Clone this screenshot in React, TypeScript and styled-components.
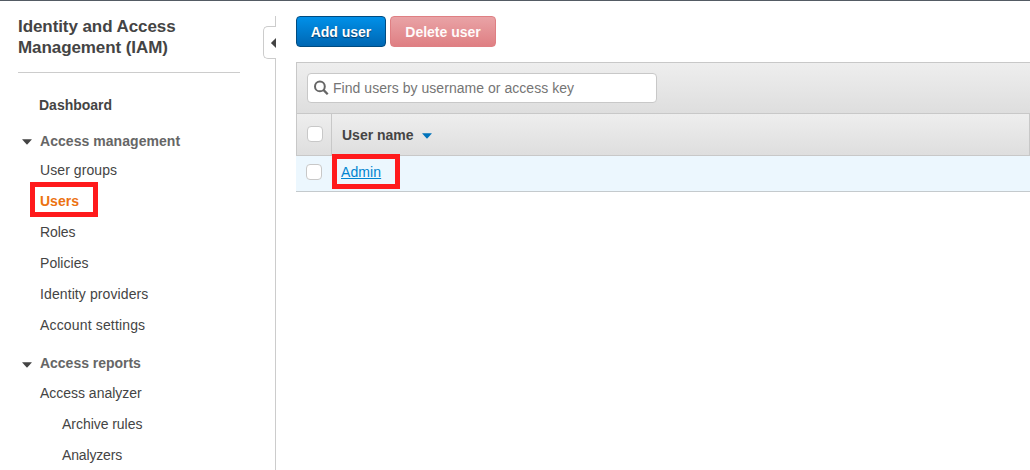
import React from 'react';
import styled, { createGlobalStyle } from 'styled-components';

const GlobalStyle = createGlobalStyle`
  * { box-sizing: border-box; }
  body {
    margin: 0;
    background: #fff;
    color: #444;
    font: 14px/20px "Liberation Sans", Arial, sans-serif;
    overflow: hidden;
  }
`;

const Page = styled.div`
  display: flex;
  height: 470px;
  border-top: 1px solid #545b64;
  overflow: hidden;
`;

const Sidebar = styled.nav`
  width: 240px;
  flex: none;
  padding: 15px 0 0 18px;
`;

const Title = styled.h1`
  margin: 0;
  padding-bottom: 14px;
  border-bottom: 1px solid #ccc;
  font-size: 17px;
  line-height: 21px;
  letter-spacing: -0.08px;
`;

const NavList = styled.div`
  display: flex;
  flex-direction: column;
  padding-top: 17px;
`;

const Item = styled.a<{ $level?: number; $active?: boolean; $bold?: boolean; $track?: number }>`
  height: 31px;
  line-height: 31px;
  padding-left: ${(p) => (p.$level === 2 ? 44 : 22)}px;
  letter-spacing: ${(p) => p.$track ?? 0.08}px;
  font-weight: ${(p) => (p.$active || p.$bold ? 700 : 400)};
  color: ${(p) => (p.$active ? '#ec7211' : '#444')};
`;

const Dashboard = styled(Item)`
  padding-left: 21px;
`;

const Group = styled.div<{ $top: number; $height?: number; $track?: number }>`
  display: flex;
  align-items: center;
  gap: 8px;
  height: 28px;
  margin-top: ${(p) => p.$top}px;
  margin-bottom: ${(p) => (p.$height ?? 28) - 28}px;
  padding-left: 4px;
  color: #666;
  font-weight: 700;
  letter-spacing: ${(p) => p.$track ?? 0.05}px;
`;

const Marked = styled.span`
  position: relative;
`;

const Highlight = styled.span<{ $left: number; $top: number }>`
  position: absolute;
  left: ${(p) => p.$left}px;
  top: ${(p) => p.$top}px;
  width: 68px;
  height: 35px;
  border: 5px solid #ff1a1c;
  pointer-events: none;
`;

const Splitter = styled.div`
  width: 13px;
  flex: none;
  margin: 15px 0 0 23px;
  display: flex;
  flex-direction: column;
  align-items: flex-end;
`;

const Rule = styled.div<{ $height?: number }>`
  width: 1px;
  background: #ccc;
  ${(p) => (p.$height ? `height: ${p.$height}px;` : 'flex: 1;')}
`;

const CollapseTab = styled.button`
  width: 13px;
  height: 33px;
  padding: 0;
  display: flex;
  align-items: center;
  justify-content: flex-end;
  background: #fff;
  border: 1px solid #ccc;
  border-right: 0;
  border-radius: 5px 0 0 5px;
`;

const Main = styled.main`
  flex: 1;
  min-width: 0;
  padding: 15px 0 0 20px;
`;

const Actions = styled.div`
  display: flex;
  gap: 4px;
  margin-bottom: 15px;
`;

const Button = styled.button<{ $danger?: boolean }>`
  width: ${(p) => (p.$danger ? 106 : 90)}px;
  height: 31px;
  padding: 0;
  border: 1px solid ${(p) => (p.$danger ? '#df7f83' : '#004b80')};
  border-radius: 4px;
  background: ${(p) =>
    p.$danger ? 'linear-gradient(#e9a3a6, #df7f83)' : 'linear-gradient(#0090e9, #0067b3)'};
  color: ${(p) => (p.$danger ? '#fffafa' : '#fff')};
  text-shadow: ${(p) => (p.$danger ? 'none' : '0 1px 1px #003a66')};
  font: 700 14px/31px "Liberation Sans", Arial, sans-serif;
  letter-spacing: -0.02px;
`;

const Toolbar = styled.div`
  height: 51px;
  padding: 10px;
  border: 1px solid #c8c8c8;
  border-width: 1px 0 0 1px;
  background: linear-gradient(#eee, #dedede);
`;

const Search = styled.div`
  width: 350px;
  height: 30px;
  display: flex;
  align-items: center;
  gap: 4px;
  padding-left: 6px;
  background: #fff;
  border: 1px solid #c8c8c8;
  border-radius: 4px;
  color: #757575;
  letter-spacing: 0.04px;
`;

const HeaderRow = styled.div`
  display: flex;
  height: 43px;
  border: 1px solid #c8c8c8;
  background: linear-gradient(#eee, #dedede);
`;

const BodyRow = styled.div`
  display: flex;
  height: 36px;
  background: #ecf7fe;
  border-bottom: 1px solid #c4cacd;
`;

const CheckCell = styled.div<{ $header?: boolean }>`
  width: 35px;
  padding: ${(p) => (p.$header ? '12px 0 0 10px' : '8px 0 0 10px')};
  border-right: ${(p) => (p.$header ? '1px solid #c8c8c8' : '0')};
`;

const Checkbox = styled.div`
  width: 16px;
  height: 16px;
  background: #fff;
  border: 1px solid #c8c8c8;
  border-radius: 4px;
`;

const NameCell = styled.div<{ $header?: boolean }>`
  display: flex;
  align-items: center;
  gap: 8px;
  padding-left: 10px;
  padding-bottom: ${(p) => (p.$header ? 0 : 3)}px;
  font-weight: ${(p) => (p.$header ? 700 : 400)};
`;

const UserLink = styled.a`
  color: #0084d0;
  text-decoration: underline;
  letter-spacing: 0.1px;
`;

const CaretIcon = styled.svg<{ $drop: number }>`
  flex: none;
  margin-top: ${(p) => p.$drop * 2}px;
`;

const Caret = ({ color = '#444', drop = 1 }: { color?: string; drop?: number }) => (
  <CaretIcon $drop={drop} width="10" height="6" viewBox="0 0 10 6">
    <path d="M.5.2h9q.4.2.1.6L5.5 5.3q-.5.5-1 0L.4.8Q.1.4.5.2z" fill={color} />
  </CaretIcon>
);

export default function App() {
  return (
    <>
      <GlobalStyle />
      <Page>
        <Sidebar>
          <Title>
            Identity and Access
            <br />
            Management (IAM)
          </Title>
          <NavList>
            <Dashboard $bold $track={0}>Dashboard</Dashboard>
            <Group $top={6}>
              <Caret />
              Access management
            </Group>
            <Item>User groups</Item>
            <Item $active $track={0}>
              <Marked>
                Users
                <Highlight $left={-10} $top={-11} />
              </Marked>
            </Item>
            <Item $track={-0.05}>Roles</Item>
            <Item $track={0.04}>Policies</Item>
            <Item $track={0.1}>Identity providers</Item>
            <Item $track={0.16}>Account settings</Item>
            <Group $top={8} $height={29} $track={-0.02}>
              <Caret drop={2} />
              Access reports
            </Group>
            <Item $track={-0.02}>Access analyzer</Item>
            <Item $level={2} $track={-0.04}>Archive rules</Item>
            <Item $level={2} $track={-0.15}>Analyzers</Item>
          </NavList>
        </Sidebar>
        <Splitter>
          <Rule $height={10} />
          <CollapseTab aria-label="Collapse navigation">
            <svg width="5" height="10" viewBox="0 0 5 10">
              <path d="M5 0v10L.4 5.5q-.4-.5 0-1z" fill="#444" />
            </svg>
          </CollapseTab>
          <Rule />
        </Splitter>
        <Main>
          <Actions>
            <Button>Add user</Button>
            <Button $danger>Delete user</Button>
          </Actions>
          <Toolbar>
            <Search>
              <svg width="15" height="16" viewBox="0 0 15 16" fill="none" stroke="#666">
                <circle cx="5.9" cy="6.4" r="4.9" strokeWidth="2" />
                <path d="M9.4 9.9l4.3 4.3" strokeWidth="2.3" />
              </svg>
              Find users by username or access key
            </Search>
          </Toolbar>
          <HeaderRow>
            <CheckCell $header>
              <Checkbox />
            </CheckCell>
            <NameCell $header>
              User name
              <Caret color="#0073bb" />
            </NameCell>
          </HeaderRow>
          <BodyRow>
            <CheckCell>
              <Checkbox />
            </CheckCell>
            <NameCell>
              <Marked>
                <UserLink>Admin</UserLink>
                <Highlight $left={-9} $top={-8} />
              </Marked>
            </NameCell>
          </BodyRow>
        </Main>
      </Page>
    </>
  );
}
